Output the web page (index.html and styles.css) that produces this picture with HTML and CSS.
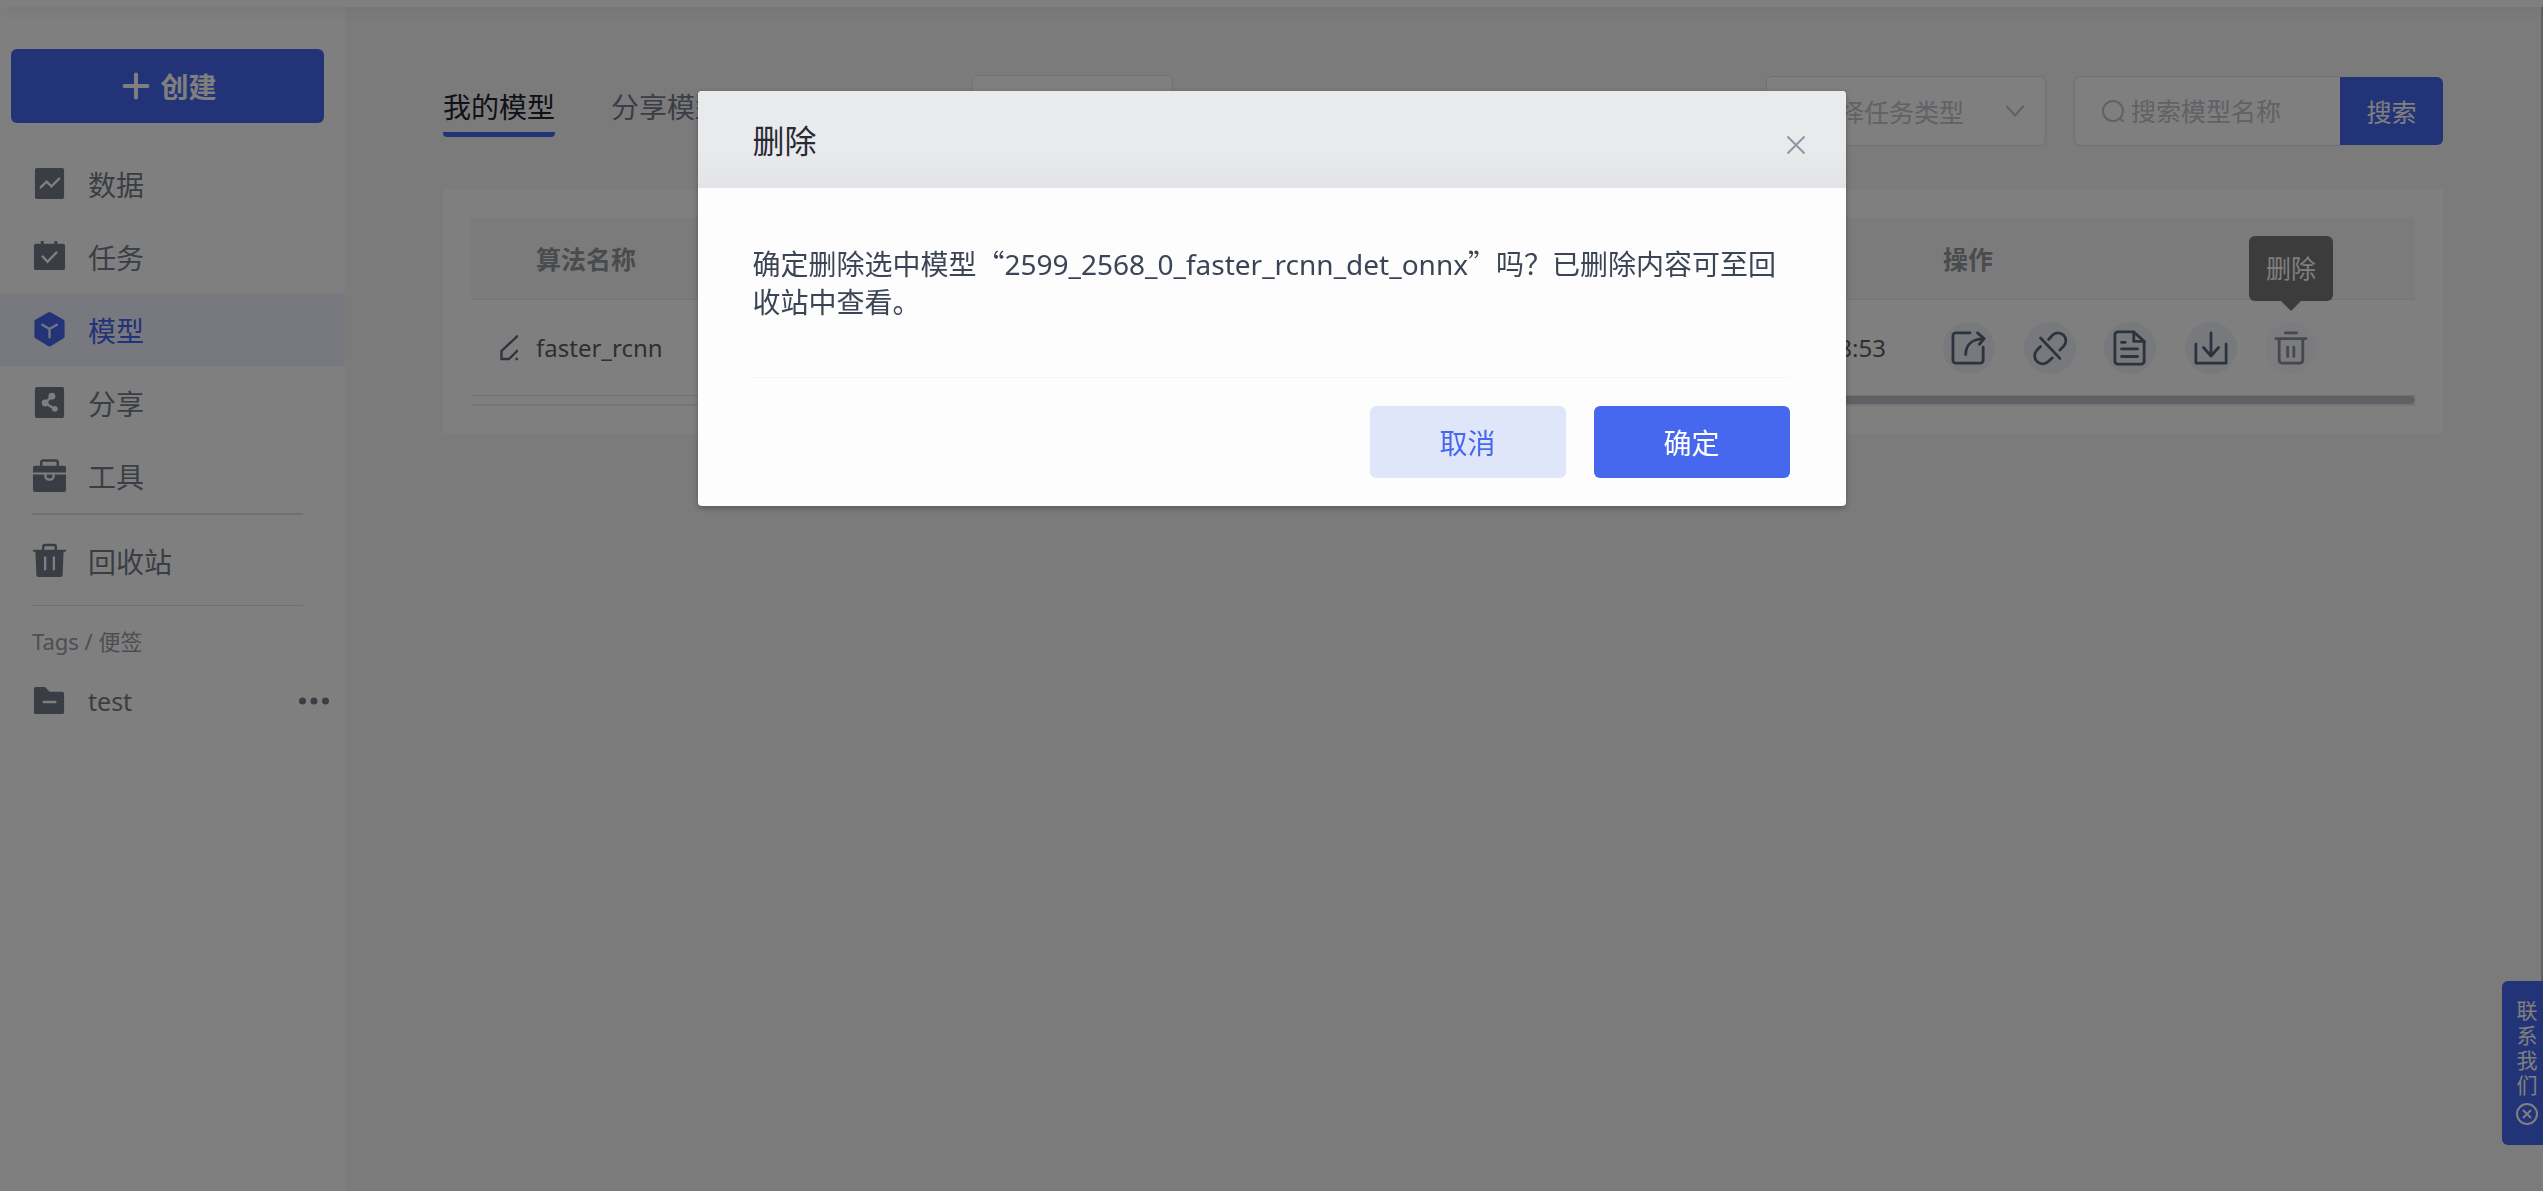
FILE: index.html
```html
<!DOCTYPE html>
<html lang="zh-CN">
<head>
<meta charset="utf-8">
<title>我的模型</title>
<link rel="stylesheet" href="styles.css">
</head>
<body>
<div class="app">
  <header class="topbar"></header>
  <div class="layout">
    <aside class="sidebar">
      <button class="create" type="button">
        <svg width="28" height="28" viewBox="0 0 28 28" fill="none" stroke="currentColor" stroke-width="4" stroke-linecap="round"><path d="M14 2.500v23M2.500 14h23"/></svg>
        <span>创建</span>
      </button>
      <nav class="menu">
        <a class="item" href="#data">
          <svg class="icon" viewBox="0 0 36 36"><rect x="3" y="2" width="30" height="32" rx="2" fill="currentColor"/><path d="M9 22l6-6 5 5 8-8" fill="none" stroke="#fff" stroke-width="2.400" stroke-linecap="round"/></svg>
          <span>数据</span>
        </a>
        <a class="item" href="#task">
          <svg class="icon" viewBox="0 0 36 36"><path d="M4 5h5V2h3v3h11V2h3v3h6a2 2 0 0 1 2 2v23a2 2 0 0 1-2 2H4a2 2 0 0 1-2-2V7a2 2 0 0 1 2-2z" fill="currentColor"/><path d="M11 18l5 5.500 9-9.500" fill="none" stroke="#fff" stroke-width="2.400" stroke-linecap="round"/></svg>
          <span>任务</span>
        </a>
        <a class="item active" href="#model">
          <svg class="icon" viewBox="0 0 36 36"><path d="M16.500 .500a3 3 0 0 1 3 0l13 7.500a2 2 0 0 1 1 2v15a2 2 0 0 1-1 2l-13 8a3 3 0 0 1-3 0L3.500 27a2 2 0 0 1-1-2V10a2 2 0 0 1 1-2z" fill="currentColor"/><path d="M10.500 13l7.500 4.500 7.500-4.500M18 17.500V26" fill="none" stroke="#e9edfd" stroke-width="2.400" stroke-linecap="round"/></svg>
          <span>模型</span>
        </a>
        <a class="item" href="#share">
          <svg class="icon" viewBox="0 0 36 36"><rect x="3" y="2" width="30" height="32" rx="2" fill="currentColor"/><path d="M20.500 11.500l-7 7 9.500 6" fill="none" stroke="#fff" stroke-width="2.400"/><circle cx="20.500" cy="11.500" r="3.500" fill="#fff"/><circle cx="13.500" cy="18.500" r="3.500" fill="#fff"/><circle cx="23.500" cy="24.500" r="3" fill="#fff"/></svg>
          <span>分享</span>
        </a>
        <a class="item" href="#tools">
          <svg class="icon" viewBox="0 0 36 36"><path d="M9.500 9V4.500a2 2 0 0 1 2-2h13a2 2 0 0 1 2 2V9" fill="none" stroke="currentColor" stroke-width="2.500"/><path d="M3 8h30a2 2 0 0 1 2 2v5H1v-5a2 2 0 0 1 2-2zM1 17h11.500c0 5 2.500 6.500 5.500 6.500s5.500-1.500 5.500-6.500H35v16a2 2 0 0 1-2 2H3a2 2 0 0 1-2-2z" fill="currentColor"/><path d="M15 17h6v2q0 2-3 2t-3-2z" fill="currentColor"/></svg>
          <span>工具</span>
        </a>
        <hr class="rule thick">
        <a class="item" href="#recycle">
          <svg class="icon" viewBox="0 0 36 36"><path d="M11.500 8V4a2 2 0 0 1 2-2h9a2 2 0 0 1 2 2v4" fill="none" stroke="currentColor" stroke-width="2.500"/><path d="M1 7h34v2h-2.500l-1 24a2 2 0 0 1-2 2h-23a2 2 0 0 1-2-2l-1-24H1z" fill="currentColor"/><path d="M13.500 14v14M22.500 14v14" stroke="#fff" stroke-width="2.400"/></svg>
          <span>回收站</span>
        </a>
        <hr class="rule">
      </nav>
      <h2 class="tags-title">Tags / 便签</h2>
      <div class="tag">
        <svg class="icon" viewBox="0 0 36 36"><path d="M4 4h9.500l4.500 5h13a2 2 0 0 1 2 2v19a2 2 0 0 1-2 2H4a2 2 0 0 1-2-2V6a2 2 0 0 1 2-2z" fill="currentColor"/><path d="M12 19.500h12" stroke="#fff" stroke-width="2.400" stroke-linecap="round"/></svg>
        <span>test</span>
        <button class="more" type="button" aria-label="更多"><svg width="30" height="8" viewBox="0 0 30 8" fill="currentColor"><circle cx="3.500" cy="4" r="3.500"/><circle cx="15" cy="4" r="3.500"/><circle cx="26.500" cy="4" r="3.500"/></svg></button>
      </div>
    </aside>
    <main class="main">
      <div class="toolbar">
        <nav class="tabs">
          <a class="tab current" href="#mine">我的模型</a>
          <a class="tab" href="#shared">分享模型</a>
        </nav>
        <button class="import" type="button" aria-label="导入"></button>
        <button class="select" type="button">
          <span>请选择任务类型</span>
          <svg width="20" height="14" viewBox="0 0 20 14" fill="none" stroke="currentColor" stroke-width="2"><path d="M1.500 2L10 11.500 18.500 2"/></svg>
        </button>
        <form class="search">
          <label class="field">
            <svg width="24" height="24" viewBox="0 0 24 24" fill="none" stroke="currentColor" stroke-width="2"><circle cx="12" cy="12" r="10"/><path d="M18.500 19l4 4"/></svg>
            <input type="text" placeholder="搜索模型名称" aria-label="搜索模型名称">
          </label>
          <button class="go" type="button">搜索</button>
        </form>
      </div>
      <section class="card">
        <table class="table">
          <thead><tr><th class="name">算法名称</th><th class="time"></th><th class="ops">操作</th></tr></thead>
          <tbody><tr>
            <td class="name"><span class="model"><svg class="pencil" viewBox="0 0 18 27" fill="none" stroke="currentColor" stroke-width="2.400"><path d="M18 1.500L1.500 17v8H9l9-9"/><path d="M15.500 25H18"/></svg>faster_rcnn</span></td>
            <td class="time">18:53</td>
            <td class="ops"><div class="actions">
              <button class="act" type="button" aria-label="分享"><svg viewBox="0 0 36 36"><path d="M19 2H4a3 3 0 0 0-3 3v26a3 3 0 0 0 3 3h26a3 3 0 0 0 3-3V17"/><path d="M14.500 25C14.500 15 21 8.500 33 8M27 2l7 6-5 6"/></svg></button>
              <button class="act" type="button" aria-label="解除关联"><svg viewBox="0 0 36 36"><path d="M16.500 9l4-4.500a8 8 0 0 1 12 11.500l-4 4M20.500 28.500l-4 3.500A8 8 0 0 1 4 20.500l4-4M8 7.500L28.500 29"/></svg></button>
              <button class="act" type="button" aria-label="详情"><svg viewBox="0 0 36 36"><path d="M5 1h17l11 10v21a3 3 0 0 1-3 3H5a3 3 0 0 1-3-3V4a3 3 0 0 1 3-3z"/><path d="M22 1v10h11M9 12h4M9 19h17M9 27h17"/></svg></button>
              <button class="act" type="button" aria-label="下载"><svg viewBox="0 0 36 36"><path d="M2 14v20h32V14M18 2v24M10 17.500l8 9 8-9"/></svg></button>
              <div class="act-wrap">
                <button class="act faded" type="button" aria-label="删除"><svg viewBox="0 0 36 36"><path d="M12 2h12M2 8h32M5.500 8v23a3 3 0 0 0 3 3h19a3 3 0 0 0 3-3V8M14.500 17v10M21 17v10"/></svg></button>
                <div class="tooltip" role="tooltip">删除</div>
              </div>
            </div></td>
          </tr></tbody>
        </table>
        <div class="hscroll"><div class="hthumb"></div></div>
      </section>
    </main>
  </div>
  <div class="vthumb"></div>
  <div class="contact">
    <span>联</span><span>系</span><span>我</span><span>们</span>
    <button class="contact-close" type="button" aria-label="收起"><svg width="24" height="24" viewBox="0 0 24 24" fill="none" stroke="currentColor" stroke-width="2"><circle cx="12" cy="12" r="10"/><path d="M8 8l8 8M16 8l-8 8"/></svg></button>
  </div>
</div>

<div class="mask">
  <div class="dialog" role="dialog" aria-modal="true" aria-labelledby="dialog-title">
    <div class="dialog-head">
      <h1 id="dialog-title">删除</h1>
      <button class="close" type="button" aria-label="关闭"><svg width="20" height="20" viewBox="0 0 20 20" fill="none" stroke="currentColor" stroke-width="2"><path d="M1.500 1.500l17 17M18.500 1.500l-17 17"/></svg></button>
    </div>
    <div class="dialog-body">
      <p>确定删除选中模型<span class="quote">“</span>2599_2568_0_faster_rcnn_det_onnx<span class="quote">”</span>吗？已删除内容可至回收站中查看。</p>
    </div>
    <div class="dialog-foot">
      <button class="btn" type="button">取消</button>
      <button class="btn primary" type="button">确定</button>
    </div>
  </div>
</div>
</body>
</html>
```
FILE: styles.css
```css
* {
  box-sizing: border-box;
}

body {
  margin: 0;
  font-family: "Noto Sans", "Noto Sans CJK SC", sans-serif;
  font-size: 25px;
  color: #5b6372;
  background: #f7f7f8;
}

button,
input {
  font: inherit;
  color: inherit;
  border: 0;
  background: none;
  padding: 0;
}

a {
  color: inherit;
  text-decoration: none;
}

svg {
  display: block;
  flex: none;
}

.app {
  position: relative;
  display: flex;
  flex-direction: column;
  height: 100vh;
  overflow: hidden;
}

.topbar {
  position: relative;
  z-index: 1;
  flex: none;
  height: 7px;
  background: #fff;
  box-shadow: 0 2px 16px rgba(30, 40, 90, 0.12);
}

.layout {
  display: flex;
  flex: 1;
}

/* sidebar */

.sidebar {
  flex: none;
  width: 345px;
  padding-top: 42px;
  background: #fff;
  color: #747c88;
}

.create {
  display: flex;
  align-items: center;
  justify-content: center;
  gap: 10px;
  width: 313px;
  height: 74px;
  margin: 0 0 24px 11px;
  padding-left: 4px;
  border-radius: 6px;
  background: #4566f0;
  color: #fff;
  font-size: 28px;
  font-weight: 700;
}

.item,
.tag {
  display: flex;
  align-items: center;
  gap: 21px;
  height: 73px;
  padding-left: 32px;
  font-size: 28px;
}

.item.active {
  background: #f0f2fd;
  color: #4566f0;
}

.icon {
  width: 35px;
  height: 35px;
}

.rule {
  height: 1px;
  margin: 8px 42px 0 32px;
  border: 0;
  background: #dfe0e8;
}

.rule.thick {
  height: 2px;
  margin: 1px 42px 9px 32px;
}

.tags-title {
  margin: 19px 0 7px 32px;
  font-size: 22px;
  line-height: 32px;
  font-weight: 400;
  color: #989da6;
}

.tag {
  padding-right: 16px;
  font-size: 25px;
}

.more {
  margin-left: auto;
}

/* main */

.main {
  flex: 1;
  padding: 68px 100px 0 98px;
}

.toolbar {
  display: flex;
  align-items: center;
  height: 72px;
}

.tabs {
  display: flex;
  align-self: flex-start;
  gap: 56px;
}

.tab {
  height: 62px;
  padding-top: 10px;
  line-height: 44px;
  font-size: 28px;
  color: #747c88;
}

.tab.current {
  color: #20242e;
  border-bottom: 5px solid #4566f0;
  border-radius: 0 0 4px 4px;
}

.import {
  width: 201px;
  height: 72px;
  margin-left: 249px;
  border: 1px solid #e4e5ea;
  border-radius: 6px;
  background: #fff;
}

.select,
.field {
  display: flex;
  align-items: center;
  height: 70px;
  border: 1px solid #dfe0e6;
  border-radius: 6px;
  background: #fff;
  color: #c0c4cc;
}

.select {
  justify-content: space-between;
  width: 280px;
  padding: 0 20px 0 22px;
  margin: 0 28px 0 auto;
}

.search {
  display: flex;
  align-items: center;
}

.field {
  gap: 6px;
  width: 266px;
  padding-left: 26px;
  border-right: 0;
  border-radius: 6px 0 0 6px;
}

.field input {
  width: 100%;
  outline: 0;
}

.field input::placeholder {
  color: #c0c4cc;
}

.go {
  width: 103px;
  height: 68px;
  border-radius: 0 6px 6px 0;
  background: #4566f0;
  color: #fff;
}

.card {
  margin-top: 42px;
  padding: 28px;
  background: #fff;
}

.table {
  width: 100%;
  border-collapse: separate;
  border-spacing: 0;
  text-align: left;
}

.table th {
  height: 83px;
  padding: 0;
  border-bottom: 1px solid #ebecf0;
  background: #f7f7f8;
  color: #949699;
  font-weight: 700;
}

.table td {
  height: 96px;
  padding: 0;
  border-bottom: 1px solid #e2e3ea;
  color: #5c5f64;
  font-size: 24px;
}

.table th.name {
  padding-left: 65px;
}

.table td.name {
  padding-left: 29px;
}

.table .time {
  width: 300px;
  padding-right: 57px;
  text-align: right;
}

.table .ops {
  width: 472px;
}

.model {
  display: flex;
  align-items: center;
  gap: 18px;
}

.pencil {
  width: 18px;
  height: 27px;
  color: #5f6b80;
}

.actions {
  display: flex;
  justify-content: space-between;
  width: 374px;
}

.act {
  display: flex;
  align-items: center;
  justify-content: center;
  width: 52px;
  height: 52px;
  border-radius: 50%;
  background: #f1f3fb;
  color: #5b677c;
}

.act svg {
  width: 34px;
  height: 34px;
  overflow: visible;
  fill: none;
  stroke: currentColor;
  stroke-width: 3;
  stroke-linecap: round;
  stroke-linejoin: round;
}

.act.faded {
  background: #f8f9fd;
  color: #8a929e;
}

.act-wrap {
  position: relative;
}

.tooltip {
  position: absolute;
  bottom: 73px;
  left: -16px;
  width: 84px;
  border-radius: 6px;
  background: #787878;
  color: #fff;
  font-size: 25px;
  line-height: 65px;
  text-align: center;
}

.tooltip::after {
  content: "";
  position: absolute;
  top: 100%;
  left: 32px;
  border: 10px solid transparent;
  border-top-color: #787878;
  border-bottom: 0;
}

.hscroll {
  height: 10px;
  border-bottom: 2px solid #e9eaf2;
}

.hthumb {
  width: 70%;
  height: 8px;
  margin-left: auto;
  border-radius: 4px;
  background: #c0c1cb;
}

.vthumb {
  position: absolute;
  top: 7px;
  right: 0;
  width: 2px;
  height: 1000px;
  background: #c0c1cb;
}

.contact {
  position: absolute;
  right: 0;
  bottom: 46px;
  display: flex;
  flex-direction: column;
  align-items: center;
  width: 41px;
  height: 164px;
  padding: 17px 0 0 9px;
  border-radius: 6px 0 0 6px;
  background: #4566f0;
  color: #fff;
  font-size: 21px;
  line-height: 25px;
}

.contact-close {
  margin-top: 4px;
}

/* dialog */

.mask {
  position: fixed;
  inset: 0;
  z-index: 10;
  padding-top: 91px;
  background: rgba(0, 0, 0, 0.5);
}

.dialog {
  width: 1148px;
  max-width: 92%;
  margin: 0 auto;
  overflow: hidden;
  border-radius: 4px;
  background: #fdfdfd;
  box-shadow: 0 2px 6px rgba(0, 0, 0, 0.3);
}

.dialog-head {
  display: flex;
  align-items: center;
  justify-content: space-between;
  height: 97px;
  padding: 0 40px 2px 55px;
  background: linear-gradient(#e9eaec 60%, #e3e4e7);
}

.dialog-head h1 {
  margin: 0;
  font-size: 32px;
  font-weight: 400;
  color: #2a2a35;
}

.close {
  margin-top: 12px;
  color: #8f96a5;
}

.dialog-body {
  margin: 0 56px 0 55px;
  padding: 57px 0 56px;
  border-bottom: 1px solid #f5f5f5;
  color: #3c4555;
  font-size: 28px;
  line-height: 38px;
}

.dialog-body p {
  margin: 0;
}

.quote {
  font-family: "Noto Sans CJK SC", sans-serif;
  line-height: 1;
}

.dialog-foot {
  display: flex;
  justify-content: flex-end;
  gap: 28px;
  padding: 28px 56px;
}

.btn {
  width: 196px;
  height: 72px;
  border-radius: 6px;
  background: #e0e6fa;
  color: #4668ee;
  font-size: 28px;
}

.btn.primary {
  background: #4668ee;
  color: #fff;
}
```
